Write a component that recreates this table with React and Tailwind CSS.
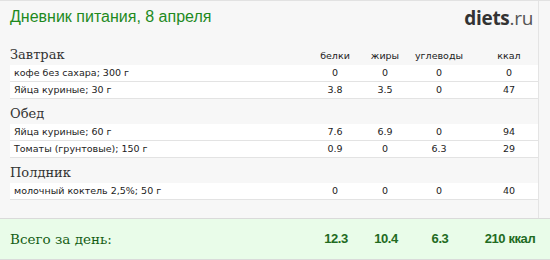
import React from 'react';

const sections = [
  {
    title: 'Завтрак',
    items: [
      { name: 'кофе без сахара; 300 г', protein: '0', fat: '0', carbs: '0', kcal: '0' },
      { name: 'Яйца куриные; 30 г', protein: '3.8', fat: '3.5', carbs: '0', kcal: '47' },
    ],
  },
  {
    title: 'Обед',
    items: [
      { name: 'Яйца куриные; 60 г', protein: '7.6', fat: '6.9', carbs: '0', kcal: '94' },
      { name: 'Томаты (грунтовые); 150 г', protein: '0.9', fat: '0', carbs: '6.3', kcal: '29' },
    ],
  },
  {
    title: 'Полдник',
    items: [
      { name: 'молочный коктель 2,5%; 50 г', protein: '0', fat: '0', carbs: '0', kcal: '40' },
    ],
  },
];

const serif = { fontFamily: '"DejaVu Serif", Georgia, serif' };

const Columns = ({ a, b, c, d, className = '' }) => (
  <div className={`flex ${className}`}>
    <div className="w-[50px] text-center">{a}</div>
    <div className="w-[50px] text-center">{b}</div>
    <div className="w-[58px] text-center">{c}</div>
    <div className="w-[70px] pl-3 text-center">{d}</div>
  </div>
);

const App = () => {
  return (
    <div
      className="w-[550px] h-[260px] bg-[#f7f7f7] border-t border-[#e2e2e2] flex flex-col overflow-hidden"
      style={{ fontFamily: '"DejaVu Sans", Verdana, sans-serif' }}
    >
      <div className="flex border-r border-[#e4e4e4] mr-[11px]">
        <div className="flex-1 flex flex-col">
          {/* Header */}
          <div className="h-[39px] flex items-start justify-between pl-[10px] pr-[5px] pt-[8px]">
            <h1
              className="text-[16px] text-[#1e8a1e] leading-none"
              style={{ fontFamily: '"Liberation Sans", Arial, sans-serif' }}
            >
              Дневник питания, 8 апреля
            </h1>
            <div
              className="text-[19px] leading-none tracking-[-0.3px]"
              style={{ fontFamily: '"Open Sans", sans-serif' }}
            >
              <span className="font-bold text-[#333]">diets</span>
              <span className="text-[#555]">.ru</span>
            </div>
          </div>

          {/* Sections */}
          <div className="pl-[10px] h-[178px]">
            {sections.map((section, i) => (
              <div key={section.title}>
                <div className="h-[25px] flex items-end pb-[4px]">
                  <div className="flex-1 text-[13px] text-[#333] leading-none" style={serif}>
                    {section.title}
                  </div>
                  {i === 0 && (
                    <Columns
                      a="белки"
                      b="жиры"
                      c="углеводы"
                      d="ккал"
                      className="text-[9.5px] text-[#222] leading-none pb-[1px]"
                    />
                  )}
                </div>
                {section.items.map((item) => (
                  <div
                    key={item.name}
                    className="h-[17px] flex items-center bg-white border-b border-[#e3e3e3] text-[9.5px] text-[#222]"
                  >
                    <div className="flex-1 pl-[4px]">{item.name}</div>
                    <Columns a={item.protein} b={item.fat} c={item.carbs} d={item.kcal} />
                  </div>
                ))}
              </div>
            ))}
          </div>
        </div>
      </div>

      {/* Footer totals */}
      <div className="h-[42px] bg-[#e9fce9] border-t border-b border-[#dadada] flex items-center pl-[10px]">
        <div className="flex-1 text-[13.5px] text-[#155e15]" style={serif}>
          Всего за день:
        </div>
        <div
          className="flex font-bold text-[13px] text-[#226b22] mr-[11px] tracking-[-0.4px]"
          style={{ fontFamily: '"Liberation Sans", Arial, sans-serif' }}
        >
          <div className="w-[50px] text-center">12.3</div>
          <div className="w-[50px] text-center">10.4</div>
          <div className="w-[58px] text-center">6.3</div>
          <div className="w-[70px] pl-3 text-center">210 ккал</div>
        </div>
      </div>
    </div>
  );
};

export default App;
